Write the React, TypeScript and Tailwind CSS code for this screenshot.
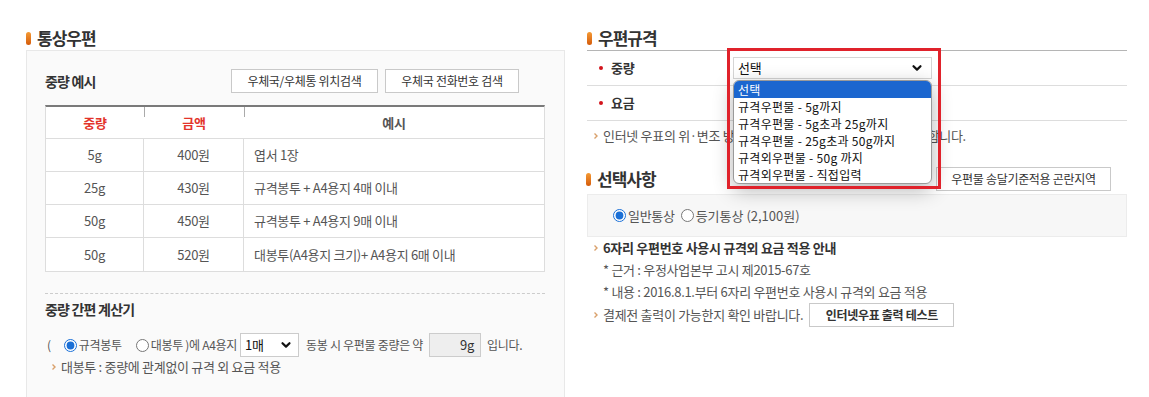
import React from "react";

const Marker = () => (
  <svg width="6" height="8" viewBox="0 0 6 8" className="shrink-0">
    <path d="M1.5 1.5 L4 4 L1.5 6.5" stroke="#d9a06b" strokeWidth="1.4" fill="none" />
  </svg>
);

const Chevron = ({ size = 12 }: { size?: number }) => (
  <svg width={size} height={size} viewBox="0 0 12 12">
    <path d="M2.5 4.2 L6 7.6 L9.5 4.2" stroke="#111" strokeWidth="2.2" fill="none" strokeLinecap="round" strokeLinejoin="round" />
  </svg>
);

const Title = ({ text }: { text: string }) => (
  <div className="flex h-[24px] items-center gap-[6px]">
    <span className="h-[13px] w-[5px] rounded-full bg-gradient-to-b from-[#f49a33] to-[#d45a07]" />
    <span className="text-[17px] font-bold tracking-[-1px] text-[#333]">{text}</span>
  </div>
);

const rows = [
  ["5g", "400원", "엽서 1장"],
  ["25g", "430원", "규격봉투 + A4용지 4매 이내"],
  ["50g", "450원", "규격봉투 + A4용지 9매 이내"],
  ["50g", "520원", "대봉투(A4용지 크기)+ A4용지 6매 이내"],
];

const options = [
  "선택",
  "규격우편물 - 5g까지",
  "규격우편물 - 5g초과 25g까지",
  "규격우편물 - 25g초과 50g까지",
  "규격외우편물 - 50g 까지",
  "규격외우편물 - 직접입력",
];

export default function App() {
  return (
    <div className="h-[397px] w-[1149px] overflow-hidden bg-white font-['Noto_Sans_CJK_KR','Noto_Sans',sans-serif] text-[13px] tracking-[-0.3px] text-[#555]">
      <div className="flex gap-[22px] pl-[26px] pt-[26px]">
        {/* LEFT */}
        <div className="w-[539px] shrink-0">
          <Title text="통상우편" />
          <div className="h-[360px] border border-[#e8e8e8] bg-[#fafafa] pl-[18px] pr-[19px] pt-[18px]">
            <div className="flex h-[24px] items-center justify-between pr-[26px]">
              <span className="text-[14px] font-bold tracking-[-0.8px] text-[#333]">중량 예시</span>
              <div className="flex gap-[7px]">
                <button className="h-[24px] w-[147px] border border-[#c9c9c9] bg-white text-[12px] text-[#333]">우체국/우체통 위치검색</button>
                <button className="h-[24px] w-[134px] border border-[#c9c9c9] bg-white text-[12px] text-[#333]">우체국 전화번호 검색</button>
              </div>
            </div>
            <div className="mt-[12px] border-x border-b border-t-2 border-x-[#ddd] border-b-[#ddd] border-t-[#7a7a7a] bg-white">
              <div className="flex h-[32px] border-b border-[#ddd] font-bold">
                <div className="flex w-[98px] items-center justify-center text-[#e3342b]">중량</div>
                <div className="relative flex w-[100px] items-center justify-center text-[#e3342b]">
                  <span className="absolute left-0 top-0 h-[10px] w-px bg-[#aaa]" />
                  금액
                </div>
                <div className="relative flex flex-1 items-center justify-center text-[#555]">
                  <span className="absolute left-0 top-0 h-[10px] w-px bg-[#aaa]" />
                  예시
                </div>
              </div>
              {rows.map((r, i) => (
                <div key={i} className={`flex h-[33px] ${i < rows.length - 1 ? "border-b border-[#ddd]" : ""}`}>
                  <div className="flex w-[98px] items-center justify-center border-r border-[#ddd]">{r[0]}</div>
                  <div className="flex w-[100px] items-center justify-center border-r border-[#ddd]">{r[1]}</div>
                  <div className="flex flex-1 items-center pl-[10px]">{r[2]}</div>
                </div>
              ))}
            </div>
            <div className="mt-[21px] border-t border-dashed border-[#ccc] pt-[6px]">
              <div className="flex h-[18px] items-center text-[14px] font-bold tracking-[-0.8px] text-[#333]">중량 간편 계산기</div>
              <div className="mt-[15px] flex h-[24px] items-center text-[12px] tracking-[-0.3px]">
                <span className="ml-[2px] mr-[13px]">(</span>
                <input type="radio" name="env" defaultChecked className="m-0 h-[13px] w-[13px] accent-[#1a6fd6]" />
                <span className="ml-[2px]">규격봉투</span>
                <input type="radio" name="env" className="m-0 ml-[14px] h-[13px] w-[13px]" />
                <span className="ml-[2px]">대봉투 )에 A4용지</span>
                <div className="ml-[3px] flex h-[24px] w-[59px] items-center justify-between border border-[#ccc] bg-white pl-[4px] pr-[6px] text-[13px] text-[#111]">
                  <span>1매</span>
                  <Chevron />
                </div>
                <span className="ml-[7px]">동봉 시 우편물 중량은 약</span>
                <div className="ml-[6px] flex h-[24px] w-[52px] items-center justify-end border border-[#ccc] bg-[#eee] pr-[6px] text-[13px] text-[#333]">9g</div>
                <span className="ml-[6px]">입니다.</span>
              </div>
              <div className="flex h-[20px] items-center gap-[4px] pl-[6px]">
                <Marker />
                <span>대봉투 : 중량에 관계없이 규격 외 요금 적용</span>
              </div>
            </div>
          </div>
        </div>

        {/* RIGHT */}
        <div className="relative w-[540px] shrink-0">
          <Title text="우편규격" />
          <div className="border-t border-[#b5b5b5]">
            <div className="flex h-[35px] border-b border-[#ddd]">
              <div className="flex w-[140px] items-center gap-[8px] pl-[12px] font-bold text-[#333]">
                <span className="h-[4px] w-[4px] rounded-full bg-[#d2141c]" />
                중량
              </div>
              <div className="flex flex-1 items-center pl-[6px]">
                <div className="flex h-[22px] w-[199px] items-center justify-between border border-[#d5d5d5] bg-white pl-[4px] pr-[8px] text-[#111]">
                  <span>선택</span>
                  <Chevron />
                </div>
              </div>
            </div>
            <div className="flex h-[35px] border-b border-[#ddd]">
              <div className="flex w-[140px] items-center gap-[8px] pl-[12px] font-bold text-[#333]">
                <span className="h-[4px] w-[4px] rounded-full bg-[#d2141c]" />
                요금
              </div>
              <div className="flex-1" />
            </div>
          </div>
          <div className="mt-[5px] flex h-[20px] items-center gap-[4px] pl-[6px]">
            <Marker />
            <span>인터넷 우표의 위·변조 방지를 위해 꼭 컬러 프린터로 출력해야 &nbsp;합니다.</span>
          </div>
          <div className="mt-[21px] flex h-[24px] items-center justify-between pr-[16px]">
            <div className="-ml-[1px] flex items-center gap-[6px]">
              <span className="h-[13px] w-[5px] rounded-full bg-gradient-to-b from-[#f49a33] to-[#d45a07]" />
              <span className="text-[17px] font-bold tracking-[-1px] text-[#333]">선택사항</span>
            </div>
            <button className="h-[24px] w-[175px] border border-[#c9c9c9] bg-white text-[12px] text-[#333]">우편물 송달기준적용 곤란지역</button>
          </div>
          <div className="mt-[3px] flex h-[43px] items-center border border-[#ececec] bg-[#f7f7f7] pl-[25px]">
            <input type="radio" name="kind" defaultChecked className="m-0 h-[13px] w-[13px] accent-[#1a6fd6]" />
            <span className="ml-[2px]">일반통상</span>
            <input type="radio" name="kind" className="m-0 ml-[6px] h-[13px] w-[13px]" />
            <span className="ml-[2px] tracking-[0px]">등기통상 (2,100원)</span>
          </div>
          <div className="flex h-[22px] items-center gap-[4px] pl-[6px] font-bold text-[#333]">
            <Marker />
            <span>6자리 우편번호 사용시 규격외 요금 적용 안내</span>
          </div>
          <div className="flex h-[22px] items-center pl-[16px]">* 근거 : 우정사업본부 고시 제2015-67호</div>
          <div className="flex h-[22px] items-center pl-[16px]">* 내용 : 2016.8.1.부터 6자리 우편번호 사용시 규격외 요금 적용</div>
          <div className="flex h-[24px] items-center gap-[4px] pl-[6px]">
            <Marker />
            <span>결제전 출력이 가능한지 확인 바랍니다.</span>
            <button className="ml-[2px] h-[24px] w-[145px] border border-[#c9c9c9] bg-white text-[12px] font-bold text-[#333]">인터넷우표 출력 테스트</button>
          </div>

          {/* dropdown list overlay */}
          <div className="absolute left-[146px] top-[54px] h-[104px] w-[199px] overflow-hidden rounded-[6px] border border-[#9a9a9a] bg-white text-[12px] tracking-[0.3px] text-[#111] shadow-[0_6px_20px_rgba(0,0,0,0.3)]">
            {options.map((o, i) => (
              <div key={o} className={`flex h-[17px] items-center pl-[4px] ${i === 0 ? "bg-[#1b66cf] text-white" : ""}`}>{o}</div>
            ))}
          </div>
          {/* red annotation box */}
          <div className="pointer-events-none absolute left-[140px] top-[22px] h-[141px] w-[214px] border-[3px] border-[#e0222b]" />
        </div>
      </div>
    </div>
  );
}
